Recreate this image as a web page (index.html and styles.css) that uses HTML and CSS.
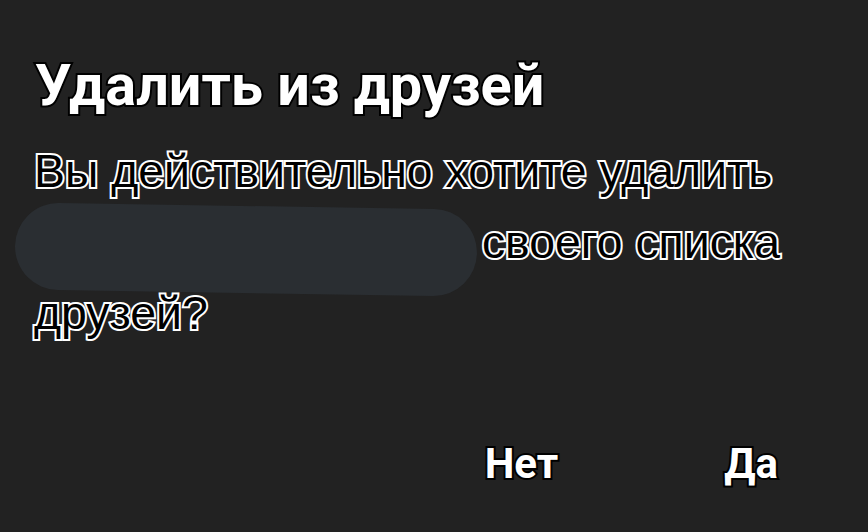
FILE: index.html
```html
<!DOCTYPE html>
<html lang="ru">
<head>
    <meta charset="UTF-8">
    <meta name="viewport" content="width=device-width, initial-scale=1.0">
    <title>Удалить из друзей</title>
    <link rel="stylesheet" href="styles.css">
</head>
<body>
<div class="dialog">
    <h1 class="dialog-title">Удалить из друзей</h1>
    <p class="dialog-text">Вы действительно хотите удалить <span class="hidden-name"></span> своего списка друзей?</p>
    <div class="dialog-actions">
        <button type="button" class="action">Нет</button>
        <button type="button" class="action">Да</button>
    </div>
</div>
</body>
</html>
```

FILE: styles.css
```css
body {
    margin: 0;
    background-color: #222222;
    font-family: Roboto, "Noto Sans", sans-serif;
}
.dialog {
    height: 532px;
    box-sizing: border-box;
    padding: 52px 40px 0 34px;
    display: flex;
    flex-direction: column;
}
.dialog-title {
    margin: 0 0 0 1px;
    color: #fff;
    font-size: 57.6px;
    font-weight: 700;
    line-height: 68px;
    -webkit-text-stroke: 4px #000;
    paint-order: stroke fill;
}
.dialog-text {
    margin: 16px 0 0 0;
    color: #000;
    font-family: "Liberation Sans", Arial, sans-serif;
    font-size: 46.4px;
    line-height: 71px;
    -webkit-text-stroke: 4px #fff;
    paint-order: stroke fill;
}
/* скрытое имя друга */
.hidden-name {
    display: inline-block;
    width: 462px;
    height: 87px;
    margin: -16px -8px -15px -19px;
    border-radius: 44px;
    background-color: #2a2e32;
    vertical-align: bottom;
    transform: rotate(0.9deg);
}
.dialog-actions {
    margin-top: auto;
    margin-bottom: 44px;
    display: flex;
    justify-content: flex-end;
    gap: 166px;
    padding-right: 50px;
}
.action {
    background: none;
    border: none;
    padding: 0;
    color: #fff;
    font-family: Roboto, sans-serif;
    font-size: 42px;
    font-weight: 700;
    -webkit-text-stroke: 4px #000;
    paint-order: stroke fill;
}
```
